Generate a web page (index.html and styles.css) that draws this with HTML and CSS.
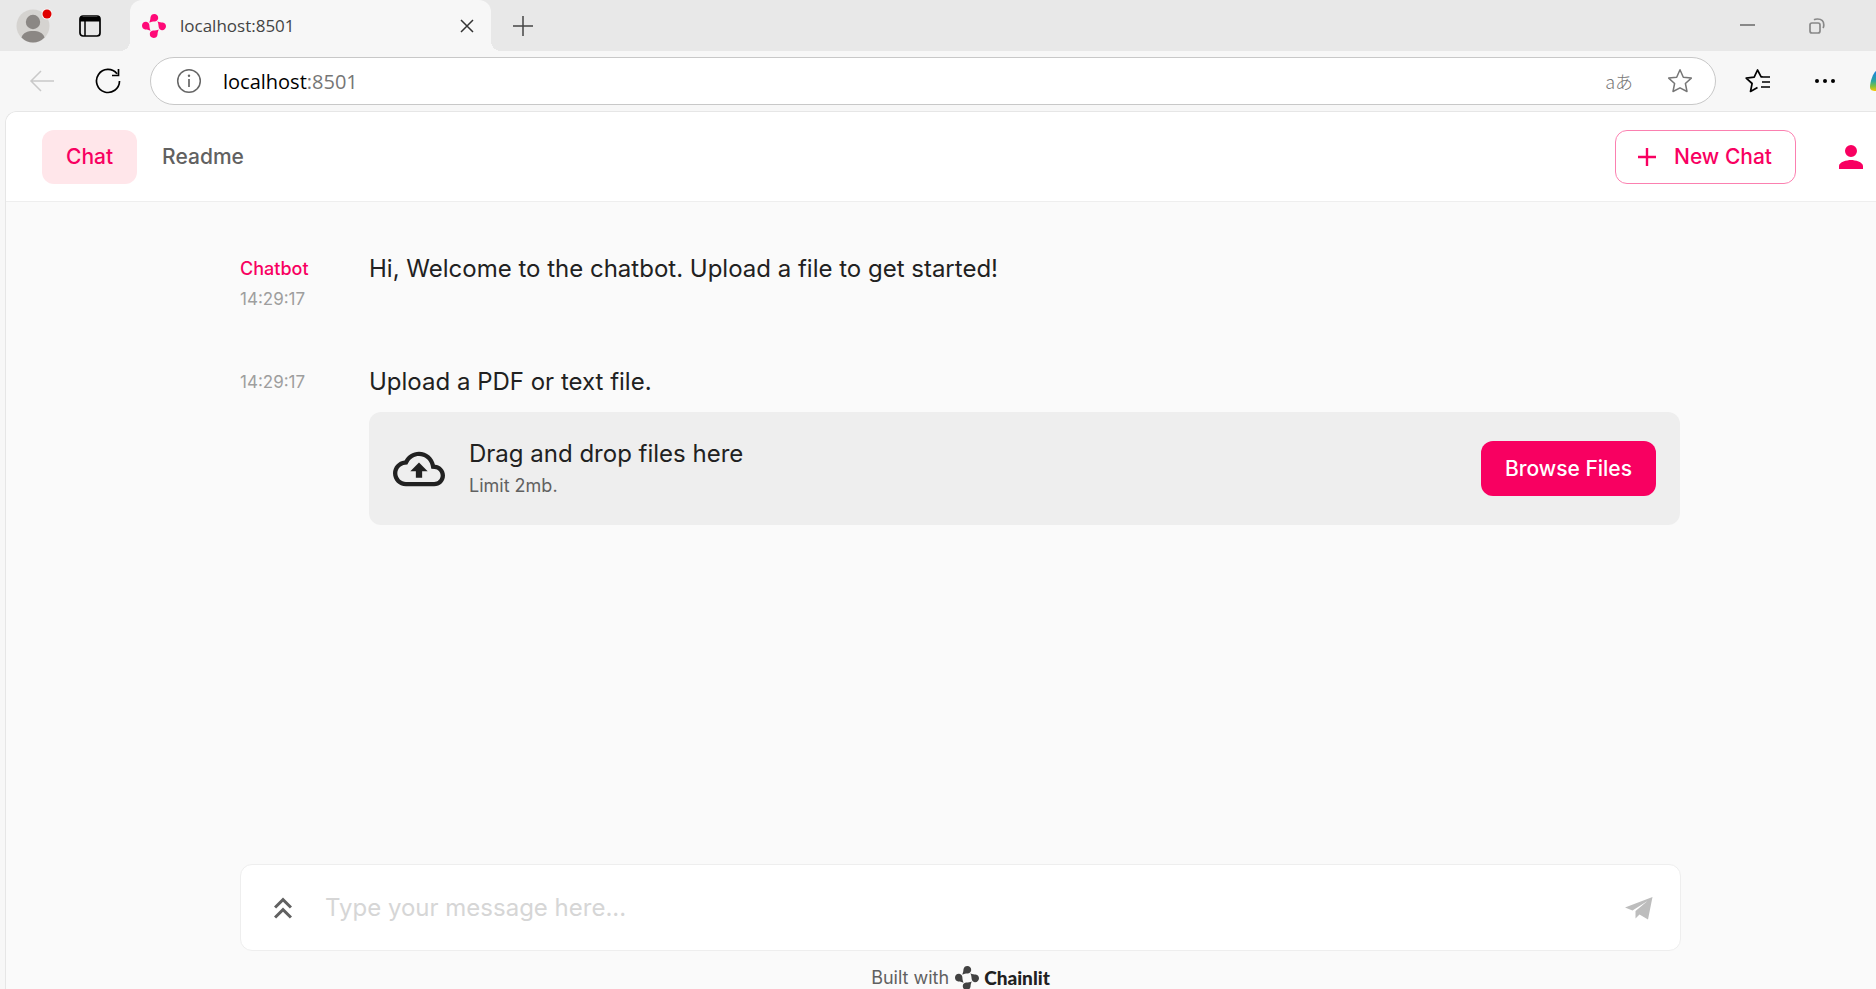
FILE: index.html
```html
<!DOCTYPE html>
<html lang="en">
<head>
<meta charset="utf-8">
<title>localhost:8501</title>
<link rel="stylesheet" href="styles.css">
</head>
<body>
<svg class="defs" aria-hidden="true">
  <symbol id="chainlit" viewBox="0 0 24 24">
    <path id="petal" d="M7.2 8.600C8.300 6.400 8.300 5 8.500 3.300 8.800 1.200 10.400 0 12.300 0c2.400 0 4.100 1.900 3.900 4.200-.2 2-1.700 3.100-3.600 3.200-2 .1-3.600.4-5.400 1.200z"/>
    <use href="#petal" transform="rotate(90 12 12)"/>
    <use href="#petal" transform="rotate(180 12 12)"/>
    <use href="#petal" transform="rotate(270 12 12)"/>
  </symbol>
</svg>
<div class="browser">
  <div class="tabstrip">
    <div class="strip-left">
      <button class="icon-btn profile" aria-label="Profile">
        <svg width="36" height="40" viewBox="0 0 36 40"><circle cx="17" cy="22" r="16.5" fill="#d5d3d0"/><circle cx="17" cy="18" r="7.2" fill="#8b8784"/><path d="M5.5 33.5C7 28.500 11.500 27 17 27s10 1.500 11.500 6.500A16.500 16.500 0 0 1 17 38.500 16.500 16.500 0 0 1 5.500 33.500z" fill="#8b8784"/><circle cx="31" cy="10" r="5.500" fill="#f7f7f7"/><circle cx="31" cy="10" r="4.500" fill="#e00000"/></svg>
      </button>
      <button class="icon-btn" aria-label="Tab actions">
        <svg width="24" height="24" viewBox="0 0 24 24"><rect x="2" y="2" width="20" height="20" rx="3" fill="none" stroke="#000" stroke-width="1.700"/><path d="M2 3h20v4.500H2z" fill="#000"/><path d="M7 7v15" stroke="#000" stroke-width="1.500"/></svg>
      </button>
    </div>
    <div class="tab">
      <svg class="favicon" width="24" height="24"><use href="#chainlit"/></svg>
      <span class="tab-title">localhost:8501</span>
      <button class="icon-btn" aria-label="Close tab"><svg width="16" height="16" viewBox="0 0 16 16"><path d="M2 2l12 12M14 2L2 14" stroke="#333" stroke-width="1.500"/></svg></button>
    </div>
    <button class="icon-btn new-tab" aria-label="New tab"><svg width="22" height="22" viewBox="0 0 22 22"><path d="M11 1v20M1 11h20" stroke="#444" stroke-width="1.500"/></svg></button>
    <div class="window-controls">
      <button class="icon-btn" aria-label="Minimize"><svg width="16" height="16" viewBox="0 0 16 16"><path d="M0 7h15" stroke="#888" stroke-width="2"/></svg></button>
      <button class="icon-btn" aria-label="Restore"><svg width="16" height="16" viewBox="0 0 16 16"><g fill="none" stroke="#888" stroke-width="1.700"><rect x="1" y="5" width="10" height="10" rx="2"/><path d="M5 1.800C6 1.200 7 1 8.500 1c4 0 6.300 2 6.300 6 0 1.500 0 2-.8 3"/></g></svg></button>
    </div>
  </div>
  <div class="toolbar">
    <button class="icon-btn" aria-label="Back"><svg width="26" height="24" viewBox="0 0 26 24"><path d="M25 12H2M12 2L2 12l10 10" fill="none" stroke="#c9c9c9" stroke-width="1.500"/></svg></button>
    <button class="icon-btn reload" aria-label="Reload"><svg width="26" height="26" viewBox="0 0 26 26"><path d="M24.500 13A11.500 11.500 0 1 1 22 5.800M23.500 1v6.500H17" fill="none" stroke="#000" stroke-width="1.700"/></svg></button>
    <div class="address">
      <svg width="26" height="26" viewBox="0 0 26 26"><circle cx="13" cy="13" r="11.300" fill="none" stroke="#666" stroke-width="1.500"/><path d="M13 11v8" stroke="#666" stroke-width="1.700"/><circle cx="13" cy="7.800" r="1.200" fill="#666"/></svg>
      <span class="url"><span class="host">localhost</span>:8501</span>
      <button class="icon-btn translate" aria-label="Translate">aあ</button>
      <button class="icon-btn" aria-label="Add to favorites"><svg width="26" height="26" viewBox="0 0 26 26"><path d="M13 1.800l3.300 7.400 8 .9-5.900 5.400 1.600 8L13 19.800l-7 3.700 1.600-8L1.700 10.100l8-.9z" fill="none" stroke="#777" stroke-width="1.500" stroke-linejoin="round"/></svg></button>
    </div>
    <button class="icon-btn favorites" aria-label="Favorites"><svg width="26" height="26" viewBox="0 0 26 26"><path d="M18 9l-2-.3L12.500 2 9.200 9.200l-8 .9 5.900 5.400-1.600 8L12.500 19.500M15.500 9h9.500M17 14h8M16 19h9" fill="none" stroke="#000" stroke-width="1.700" stroke-linejoin="round"/></svg></button>
    <button class="icon-btn more" aria-label="Settings and more"><svg width="22" height="6" viewBox="0 0 22 6"><circle cx="3" cy="3" r="2"/><circle cx="11" cy="3" r="2"/><circle cx="19" cy="3" r="2"/></svg></button>
    <button class="icon-btn copilot" aria-label="Copilot"><svg width="6" height="22" viewBox="0 0 6 22"><defs><linearGradient id="cp" x1="0" y1="0" x2="0" y2="1"><stop offset="0" stop-color="#1b7fe0"/><stop offset=".5" stop-color="#2aa6a0"/><stop offset=".75" stop-color="#7bc043"/><stop offset="1" stop-color="#fbc800"/></linearGradient></defs><path d="M6 1C3 3 0 12 0 17c0 3 2 4 6 4z" fill="url(#cp)"/></svg></button>
  </div>
</div>
<div class="app">
  <header class="header">
    <nav class="nav">
      <a class="nav-link active" href="#chat">Chat</a>
      <a class="nav-link" href="#readme">Readme</a>
    </nav>
    <div class="actions">
      <button class="new-chat"><svg width="18" height="18" viewBox="0 0 18 18"><path d="M9 0v18M0 9h18" stroke="currentColor" stroke-width="2.400"/></svg>New Chat</button>
      <button class="icon-btn" aria-label="User"><svg width="24" height="24" viewBox="0 0 24 24"><path d="M12 12a6 6 0 1 0 0-12 6 6 0 0 0 0 12zm0 3c-4 0-12 2-12 6v3h24v-3c0-4-8-6-12-6z" fill="#f80061"/></svg></button>
    </div>
  </header>
  <main class="main">
    <div class="messages">
      <article class="message">
        <div class="meta"><span class="author">Chatbot</span><time>14:29:17</time></div>
        <p class="text">Hi, Welcome to the chatbot. Upload a file to get started!</p>
      </article>
      <article class="message">
        <div class="meta"><time>14:29:17</time></div>
        <div class="body">
          <p class="text">Upload a PDF or text file.</p>
          <div class="upload">
            <svg width="52" height="52" viewBox="0 0 24 24"><path fill="#212121" d="M19.350 10.040C18.670 6.590 15.640 4 12 4 9.110 4 6.600 5.640 5.350 8.040 2.340 8.360 0 10.910 0 14c0 3.310 2.690 6 6 6h13c2.760 0 5-2.240 5-5 0-2.640-2.050-4.780-4.650-4.960zM19 18H6c-2.210 0-4-1.790-4-4 0-2.050 1.530-3.760 3.560-3.970l1.070-.11.500-.95C8.080 7.140 9.940 6 12 6c2.620 0 4.880 1.860 5.390 4.430l.3 1.500 1.530.11c1.560.1 2.780 1.410 2.780 2.960 0 1.650-1.350 3-3 3zM8 13h2.550v3h2.900v-3H16l-4-4z"/></svg>
            <div class="upload-text"><span class="upload-title">Drag and drop files here</span><span class="limit">Limit 2mb.</span></div>
            <button class="browse">Browse Files</button>
          </div>
        </div>
      </article>
    </div>
    <form class="composer">
      <button type="button" class="icon-btn" aria-label="Expand history"><svg width="36" height="36" viewBox="0 0 24 24"><path fill="#616161" d="M6 17.590L7.410 19 12 14.420 16.590 19 18 17.590l-6-6zM6 11l1.410 1.410L12 7.830l4.590 4.580L18 11l-6-6z"/></svg></button>
      <input type="text" aria-label="Message" placeholder="Type your message here...">
      <button type="button" class="icon-btn" aria-label="Send"><svg width="28" height="24" viewBox="0 0 28 24"><path fill="#bdbdbd" d="M0 11.500L27.500 1 23 23.500 14.500 18.500 10.500 22.500V15L22.500 5 7.500 14.500z"/></svg></button>
    </form>
    <footer class="footer">Built with <a class="brand" href="#chainlit-home"><svg width="24" height="24"><use href="#chainlit"/></svg>Chainlit</a></footer>
  </main>
</div>
</body>
</html>
```
FILE: styles.css
```css
* { box-sizing: border-box; }
body {
  margin: 0;
  height: 100vh;
  display: flex;
  flex-direction: column;
  overflow: hidden;
  background: #f7f7f7;
  font-family: Inter, "Liberation Sans", sans-serif;
  color: #212121;
}
p { margin: 0; }
a { text-decoration: none; }
svg { display: block; flex: none; }
button { font-family: inherit; cursor: pointer; }
.defs { position: absolute; width: 0; height: 0; }
.icon-btn { display: flex; align-items: center; justify-content: center; flex: none; padding: 0; border: 0; background: none; }

.tabstrip { display: flex; height: 51px; background: #e8e8e8; }
.strip-left {
  display: flex;
  align-items: center;
  gap: 26px;
  width: 130px;
  padding-left: 16px;
}
.profile { padding-bottom: 4px; }
.tab {
  position: relative;
  display: flex;
  align-items: center;
  width: 361px;
  padding: 0 16px 0 12px;
  background: #f7f7f7;
  border-radius: 12px 12px 0 0;
}
.tab::before, .tab::after {
  content: "";
  position: absolute;
  bottom: 0;
  width: 10px;
  height: 10px;
}
.tab::before { left: -10px; background: radial-gradient(circle at 0 0, #e8e8e8 10px, #f7f7f7 10px); }
.tab::after { right: -10px; background: radial-gradient(circle at 100% 0, #e8e8e8 10px, #f7f7f7 10px); }
.favicon { fill: #ff0a78; }
.tab-title { flex: 1; margin-left: 14px; font: 17px "Open Sans", sans-serif; color: #444; }
.new-tab { margin-left: 21px; }
.window-controls { display: flex; align-items: center; gap: 53px; margin-left: auto; padding-right: 51px; }

.toolbar { display: flex; align-items: center; height: 60px; padding: 0 0 0 29px; }
.reload { margin-left: 40px; }
.address {
  flex: 1;
  display: flex;
  align-items: center;
  height: 48px;
  margin-left: 29px;
  padding: 0 22px 0 25px;
  background: #fff;
  border: 1px solid #c8c8c8;
  border-radius: 24px;
}
.url { flex: 1; margin-left: 21px; font: 20px "Open Sans", sans-serif; color: #767676; }
.host { color: #000; }
.translate { margin-right: 34px; font: 300 18px/24px "Noto Sans CJK JP", sans-serif; color: #777; }
.favorites { margin-left: 29px; }
.more { margin-left: 43px; }
.copilot { margin-left: 34px; }

.app {
  flex: 1;
  display: flex;
  flex-direction: column;
  margin-left: 5px;
  border: solid #e6e6e6;
  border-width: 1px 0 0 1px;
  border-radius: 12px 0 0 0;
  overflow: hidden;
  background: #fafafa;
}
.header {
  display: flex;
  align-items: center;
  justify-content: space-between;
  height: 90px;
  padding: 0 13px 0 36px;
  background: #fff;
  border-bottom: 1px solid #eee;
}
.nav, .actions { display: flex; align-items: center; }
.nav { gap: 1px; }
.nav-link { padding: 0 24px; border-radius: 12px; font-size: 21px; font-weight: 500; line-height: 54px; color: #616161; }
.nav-link.active { background: #ffe6ea; color: #f80061; }
.actions { gap: 43px; }
.new-chat {
  display: flex;
  align-items: center;
  gap: 18px;
  height: 54px;
  padding: 0 23px 0 22px;
  border: 1px solid #fb80b0;
  border-radius: 12px;
  background: #fff;
  color: #f80061;
  font-size: 21px;
  font-weight: 500;
}
.main { flex: 1; display: flex; flex-direction: column; padding: 49px 195px 0 234px; }
.messages { flex: 1; display: flex; flex-direction: column; gap: 47px; padding-right: 1px; }
.message { display: grid; grid-template-columns: 129px 1fr; }
.meta { display: flex; flex-direction: column; }
.author { font-size: 18px; font-weight: 500; line-height: 36px; color: #f80061; }
.meta time { font-size: 17px; line-height: 36px; color: #9e9e9e; }
.author + time { line-height: 24px; padding-bottom: 6px; }
.meta .author + time { line-height: 24px; }
.text { font-size: 24px; line-height: 36px; }
.upload {
  display: flex;
  align-items: center;
  gap: 24px;
  margin-top: 12px;
  padding: 24px;
  background: #eee;
  border-radius: 12px;
}
.upload-text { flex: 1; display: flex; flex-direction: column; }
.upload-title { font-size: 24px; line-height: 35px; }
.limit { font-size: 18px; line-height: 30px; color: #616161; }
.browse { height: 55px; padding: 0 24px; border: 0; border-radius: 12px; background: #f80061; color: #fff; font-size: 21px; font-weight: 500; }
.composer {
  display: flex;
  align-items: center;
  height: 87px;
  padding: 0 27px 0 24px;
  background: #fff;
  border: 1px solid #eee;
  border-radius: 12px;
}
.composer input { flex: 1; margin: 0 24px; padding: 0; border: 0; outline: 0; background: none; font: 24px Inter, sans-serif; color: #212121; }
.composer input::placeholder { color: #d6d6d6; opacity: 1; }
.footer { display: flex; align-items: center; justify-content: center; gap: 6px; height: 38px; padding-top: 15px; font-size: 18px; line-height: 24px; color: #616161; }
.brand { display: flex; align-items: center; gap: 5px; color: #212121; font: 900 19px/24px Lato, sans-serif; }
.brand svg { fill: #424242; }
```
